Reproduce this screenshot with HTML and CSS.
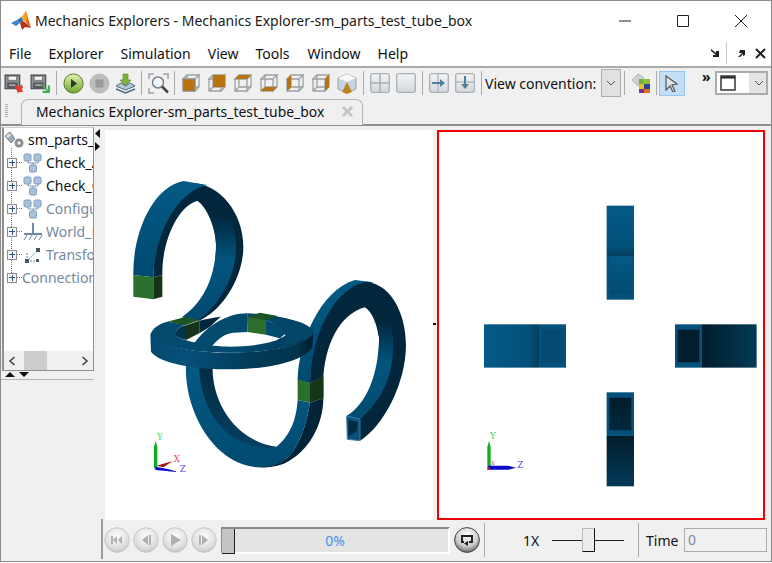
FILE: index.html
```html
<!DOCTYPE html>
<html lang="en">
<head>
<meta charset="utf-8">
<title>Mechanics Explorers</title>
<link rel="stylesheet" href="styles.css">
</head>
<body>
<svg class="defs" width="0" height="0" aria-hidden="true">
  <defs>
    <linearGradient id="g-play" x1="0" y1="0" x2="0" y2="1"><stop offset="0" stop-color="#dff2b0"/><stop offset="1" stop-color="#6fa52c"/></linearGradient>
    <radialGradient id="g-ball" cx=".5" cy=".35" r=".7"><stop offset="0" stop-color="#fff"/><stop offset=".7" stop-color="#ddd"/><stop offset="1" stop-color="#bbb"/></radialGradient>
    <radialGradient id="g-ball-dark" cx=".5" cy=".3" r=".75"><stop offset="0" stop-color="#fff"/><stop offset=".6" stop-color="#ccc"/><stop offset="1" stop-color="#555"/></radialGradient>
    <linearGradient id="g-tile" x1="0" y1="0" x2="0" y2="1"><stop offset="0" stop-color="#f4f4f4"/><stop offset="1" stop-color="#d4d8dc"/></linearGradient>
    <symbol id="cube" viewBox="0 0 20 20">
      <path d="M2 6h12v12H2zM2 6l4-4h12l-4 4zM14 6l4-4v12l-4 4zM2 18l4-4h12M6 2v12" fill="none" stroke="#9aa0a4" stroke-width="1.3"/>
    </symbol>
    <symbol id="floppy" viewBox="0 0 20 20">
      <path d="M1 2h14v13H1z" fill="#8b8f94" stroke="#444" stroke-width="1"/>
      <path d="M4 3h8v4H4z" fill="#f2f2f2" stroke="#555" stroke-width=".6"/>
      <path d="M3 9h10v6H3z" fill="#55595e"/>
      <path d="M5 11h6v1H5z" fill="#ddd"/>
    </symbol>
    <symbol id="tile" viewBox="0 0 20 20">
      <rect x=".7" y=".7" width="18.6" height="18.6" rx="2" fill="url(#g-tile)" stroke="#a8b0b6" stroke-width="1.3"/>
    </symbol>
    <symbol id="block" viewBox="0 0 20 20">
      <path d="M5 7v3h10V7M10 10v3" fill="none" stroke="#7f9ab8" stroke-width="1"/>
      <rect x="1" y="1" width="7" height="7" rx="1.5" fill="#a9c2dc" stroke="#7f9ab8"/>
      <rect x="11" y="1" width="7" height="7" rx="1.5" fill="#a9c2dc" stroke="#7f9ab8"/>
      <rect x="6.500" y="12" width="7" height="7" rx="1.500" fill="#a9c2dc" stroke="#7f9ab8"/>
    </symbol>
    <symbol id="round" viewBox="0 0 26 26">
      <circle cx="13" cy="13" r="12.300" fill="url(#g-ball)" stroke="#c8c8c8"/>
    </symbol>
  </defs>
</svg>

<div class="window">
  <header class="titlebar">
    <svg class="logo" width="22" height="22" viewBox="0 0 22 22">
      <path d="M1 13l6-3 3 3-4 3z" fill="#3f86c6"/>
      <path d="M7 10l5-3 1 4-3 2z" fill="#2a6ea8"/>
      <path d="M12 7l4-6 5 17-4-4-3-5z" fill="#e8641b"/>
      <path d="M12 7l4-6 1 9-3 2z" fill="#f2a516"/>
      <path d="M10 13l3-2 4 3 4 4-6-1-3 3z" fill="#b9301a"/>
    </svg>
    <span class="title">Mechanics Explorers - Mechanics Explorer-sm_parts_test_tube_box</span>
    <div class="caption">
      <svg width="14" height="14" viewBox="0 0 14 14"><path d="M1 7h12" stroke="#222" stroke-width="1"/></svg>
      <svg width="14" height="14" viewBox="0 0 14 14"><path d="M1.500 1.500h11v11h-11z" fill="none" stroke="#222"/></svg>
      <svg width="14" height="14" viewBox="0 0 14 14"><path d="M1 1l12 12M13 1L1 13" stroke="#222" stroke-width="1"/></svg>
    </div>
  </header>

  <nav class="menubar">
    <span>File</span><span>Explorer</span><span>Simulation</span><span>View</span><span>Tools</span><span>Window</span><span>Help</span>
    <div class="dock">
      <svg width="10" height="10" viewBox="0 0 10 10"><path d="M1 1l5 4V3l3 0v6H3V7h3L1 3z" fill="#222"/></svg>
      <i class="dock-sep"></i>
      <svg width="10" height="10" viewBox="0 0 10 10"><path d="M2 9L6 5H3l1-3h5v5l-2 1V6L4 9z" fill="#222"/></svg>
      <svg width="11" height="11" viewBox="0 0 11 11"><path d="M1 1l9 9M10 1l-9 9" stroke="#222" stroke-width="2"/></svg>
    </div>
  </nav>

  <div class="toolbar">
    <span class="tb"><svg width="21" height="21" viewBox="0 0 20 20"><use href="#floppy"/><path d="M11 11l3 2 3-2 1 3-1 1 1 3-3 0-2 1-1-3-2-2z" fill="#e63a2e"/></svg></span>
    <span class="tb"><svg width="21" height="21" viewBox="0 0 20 20"><use href="#floppy"/><path d="M11 10l6 6v-4l2 0v7h-7v-2h4l-6-6z" fill="#3fb05a"/></svg></span>
    <i class="sep"></i>
    <span class="tb"><svg width="21" height="21" viewBox="0 0 21 21"><circle cx="10.500" cy="10.500" r="9.600" fill="url(#g-play)" stroke="#5a7a30"/><path d="M8 6l6 4.500-6 4.500z" fill="#333"/></svg></span>
    <span class="tb"><svg width="21" height="21" viewBox="0 0 21 21"><circle cx="10.500" cy="10.500" r="10" fill="#bdbdbd"/><rect x="6.500" y="6.500" width="8" height="8" fill="#9a9a9a"/></svg></span>
    <span class="tb"><svg width="21" height="21" viewBox="0 0 21 21"><path d="M8 1h5v6h3l-5.500 6L5 7h3z" fill="#7fb23a" stroke="#55802a" stroke-width=".6"/><path d="M1 13l5-3 4.500 3 4.500-3 5 3-9.500 4z" fill="#b8cbd8" stroke="#4b6a80"/><path d="M1 16l9.500 4 9.500-4" fill="none" stroke="#4b6a80" stroke-width="1.500"/></svg></span>
    <i class="sep"></i>
    <span class="tb"><svg width="21" height="21" viewBox="0 0 21 21"><path d="M1 6V1h5M15 1h5v5M1 15v5h5" fill="none" stroke="#9ba3a9" stroke-width="1.500"/><circle cx="10" cy="9.500" r="5.500" fill="#f4f8fb" stroke="#77808a" stroke-width="1.500"/><path d="M14 13.500l6 6" stroke="#444" stroke-width="2.500"/></svg></span>
    <i class="sep"></i>
    <span class="tb"><svg width="20" height="20" viewBox="0 0 20 20"><use href="#cube"/><path d="M2 6h12v12H2z" fill="#b8730f" stroke="#8f8f8f"/></svg></span>
    <span class="tb"><svg width="20" height="20" viewBox="0 0 20 20"><use href="#cube"/><path d="M6 2h12v12H6z" fill="#b8730f"/></svg></span>
    <span class="tb"><svg width="20" height="20" viewBox="0 0 20 20"><use href="#cube"/><path d="M2 6l4-4h12l-4 4z" fill="#b8730f"/></svg></span>
    <span class="tb"><svg width="20" height="20" viewBox="0 0 20 20"><use href="#cube"/><path d="M2 18l4-4h12l-4 4z" fill="#b8730f"/></svg></span>
    <span class="tb"><svg width="20" height="20" viewBox="0 0 20 20"><use href="#cube"/><path d="M2 6l4-4v12l-4 4z" fill="#b8730f"/></svg></span>
    <span class="tb"><svg width="20" height="20" viewBox="0 0 20 20"><use href="#cube"/><path d="M14 6l4-4v12l-4 4z" fill="#b8730f"/></svg></span>
    <span class="tb"><svg width="20" height="21" viewBox="0 0 20 21"><path d="M1 5l9-4 9 4v11l-9 4-9-4z" fill="#c6d4e2" stroke="#9aa0a4"/><path d="M1 5l9 4 9-4-9-4z" fill="#f8f8f8"/><path d="M10 9l5 10-5 2-5-2z" fill="#b8841c"/></svg></span>
    <i class="sep"></i>
    <span class="tb"><svg width="20" height="20" viewBox="0 0 20 20"><use href="#tile"/><path d="M10 1v18M1 10h18" stroke="#a8b0b6" stroke-width="1.500"/></svg></span>
    <span class="tb"><svg width="20" height="20" viewBox="0 0 20 20"><use href="#tile"/></svg></span>
    <i class="sep"></i>
    <span class="tb"><svg width="20" height="20" viewBox="0 0 20 20"><use href="#tile"/><path d="M9 1v18" stroke="#a8b0b6" stroke-width="1.200"/><path d="M3 9h8V6l5 4-5 4v-3H3z" fill="#4f7f9e"/></svg></span>
    <span class="tb"><svg width="20" height="20" viewBox="0 0 20 20"><use href="#tile"/><path d="M1 9h18" stroke="#a8b0b6" stroke-width="1.200"/><path d="M9 3h2v8h3l-4 5-4-5h3z" fill="#4f7f9e"/></svg></span>
    <i class="sep"></i>
    <span class="tb-label">View convention:</span>
    <span class="drop"><svg width="10" height="6" viewBox="0 0 10 6"><path d="M1 1l4 4 4-4" fill="none" stroke="#555"/></svg></span>
    <i class="sep"></i>
    <span class="tb"><svg width="21" height="21" viewBox="0 0 21 21"><path d="M1 7l6-6 6 4-6 8z" fill="#c9d0d6" stroke="#b0b6bb"/><path d="M8 6h4v5H8z" fill="#6fae3a"/><path d="M12 6h7v5h-7z" fill="#8fbf3a"/><path d="M8 11h5v5H8z" fill="#e4c21e"/><path d="M13 11h6v5h-6z" fill="#2a3f9a"/><path d="M8 16h5v4H8z" fill="#7a2d8f"/><path d="M13 16h6v4h-6z" fill="#e8701a"/></svg></span>
    <i class="sep narrow"></i>
    <span class="tb active"><svg width="14" height="17" viewBox="0 0 14 17"><path d="M1 1l11 8-5 1 3 6-2 1-3-6-4 4z" fill="#dfe4e8" stroke="#555" stroke-width="1.200"/></svg></span>
    <span class="chev">»</span>
    <span class="combo">
      <span class="combo-box"><svg width="16" height="16" viewBox="0 0 16 16"><path d="M1 1h14v14H1z" fill="#fff" stroke="#333" stroke-width="1.500"/><path d="M1 2.500h14" stroke="#222" stroke-width="2"/></svg></span>
      <svg class="combo-arrow" width="10" height="6" viewBox="0 0 10 6"><path d="M1 1l4 4 4-4" fill="none" stroke="#555"/></svg>
    </span>
  </div>

  <div class="tabstrip">
    <i class="grip"></i>
    <div class="tab">
      <span>Mechanics Explorer-sm_parts_test_tube_box</span>
      <svg width="13" height="13" viewBox="0 0 13 13"><path d="M2 2l9 9M11 2l-9 9" stroke="#c2c6ca" stroke-width="3"/></svg>
    </div>
  </div>

  <main class="workspace">
    <aside class="side">
      <div class="tree-box">
        <div class="tree">
          <div class="row root">
            <svg width="22" height="18" viewBox="0 0 22 18"><path d="M1 5l5-4 5 7-4 4z" fill="#9aa9b8" stroke="#6a7682" stroke-width=".8"/><path d="M2 5l4-3 1 2-3 3z" fill="#dfe6ec"/><circle cx="15" cy="12" r="4.500" fill="#8d8d8d"/><circle cx="15" cy="12" r="1.700" fill="#eee"/></svg>
            <span>sm_parts_test_tube_box</span>
          </div>
          <div class="row"><i class="plus"></i><i class="dots"></i><svg width="20" height="20" viewBox="0 0 20 20"><use href="#block"/></svg><span>Check_Assembly</span></div>
          <div class="row"><i class="plus"></i><i class="dots"></i><svg width="20" height="20" viewBox="0 0 20 20"><use href="#block"/></svg><span>Check_Geometry</span></div>
          <div class="row off"><i class="plus"></i><i class="dots"></i><svg width="20" height="20" viewBox="0 0 20 20"><use href="#block"/></svg><span>Configuration</span></div>
          <div class="row off"><i class="plus"></i><i class="dots"></i><svg width="20" height="20" viewBox="0 0 20 20"><path d="M10 1v11M1 12h18" stroke="#6f8aa6" stroke-width="2"/><path d="M4 13l-3 5M9 13l-3 5M14 13l-3 5M19 13l-3 5" stroke="#6f8aa6"/></svg><span>World_Frame</span></div>
          <div class="row off"><i class="plus"></i><i class="dots"></i><svg width="20" height="20" viewBox="0 0 20 20"><path d="M4 16L15 5M4 16h11M4 16V8" fill="none" stroke="#6f8aa6" stroke-dasharray="2 1"/><path d="M2 14h4v4H2zM13 3h4v4h-4zM13 14h3v3h-3z" fill="#46586a"/></svg><span>Transform</span></div>
          <div class="row off conn"><i class="plus"></i><i class="dots"></i><span>Connections</span></div>
        </div>
        <div class="hscroll">
          <svg width="8" height="10" viewBox="0 0 8 10"><path d="M6.500 1L2 5l4.500 4" fill="none" stroke="#444" stroke-width="1.600"/></svg>
          <i class="thumb"></i>
          <svg width="8" height="10" viewBox="0 0 8 10"><path d="M1.500 1L6 5 1.500 9" fill="none" stroke="#444" stroke-width="1.600"/></svg>
        </div>
      </div>
      <div class="split">
        <svg width="26" height="6" viewBox="0 0 26 6"><path d="M0 5l5-5 5 5zM14 0h10l-5 5z" fill="#111"/></svg>
      </div>
    </aside>

    <div class="sash">
      <svg width="6" height="24" viewBox="0 0 6 24"><path d="M5 0v9L0 4.500zM0 13v9l5-4.500z" fill="#111"/></svg>
    </div>

    <div class="views">
      <section class="view">
        <svg class="scene" viewBox="0 0 328 390">
          <defs>
            <linearGradient id="lt" x1="0" y1="0" x2="0" y2="1"><stop offset="0" stop-color="#045a85"/><stop offset="1" stop-color="#004a70"/></linearGradient>
            <linearGradient id="band" x1="0" y1="0" x2="0" y2="1"><stop offset="0" stop-color="#02263b"/><stop offset=".12" stop-color="#02263b"/><stop offset=".5" stop-color="#02557f"/><stop offset="1" stop-color="#024a70"/></linearGradient>
            <linearGradient id="ringside" x1="0" y1="0" x2="1" y2="0"><stop offset="0" stop-color="#054a70"/><stop offset=".2" stop-color="#05507a"/><stop offset=".6" stop-color="#033c5a"/><stop offset=".9" stop-color="#02334c"/><stop offset="1" stop-color="#021c2a"/></linearGradient>
            <linearGradient id="ringtop" x1="0" y1="0" x2="1" y2="0"><stop offset="0" stop-color="#024a6e"/><stop offset=".5" stop-color="#034a70"/><stop offset="1" stop-color="#023a58"/></linearGradient>
            <linearGradient id="lowin" x1="0" y1="0" x2="0" y2="1"><stop offset="0" stop-color="#022c44"/><stop offset="1" stop-color="#053f60"/></linearGradient>
          </defs>
          <g transform="translate(5 40) scale(.3333)">
            <!-- right arc, behind -->
            <path d="M563 630C565 520 630 360 735 330L790 337C700 370 610 480 600 640Z" fill="url(#lt)"/>
            <path d="M600 640C605 480 680 350 770 335C850 345 888 440 888 525C888 640 820 770 750 812L748 748C810 690 845 590 805 495C800 460 785 425 765 412C700 430 650 500 640 620Z" fill="#02263b"/>
            <path d="M765 412C800 425 812 490 806 530C800 620 770 700 710 738L748 748C810 700 850 620 850 525C850 470 835 430 825 412Z" fill="url(#band)"/>
            <path d="M710 738L750 748 750 812 712 808Z" fill="#0b5078" stroke="#3c7ea6" stroke-width="3"/>
            <path d="M716 750L742 756 742 782 716 800Z" fill="#032a40"/>
            <path d="M716 800L742 782 742 806Z" fill="#0a5279"/>
            <!-- lower arc -->
            <path d="M228 585C222 720 310 885 445 892C490 895 530 875 552 840C580 795 592 745 600 698L563 690C558 760 535 800 500 830C430 840 330 780 300 640L268 590Z" fill="url(#lt)"/>
            <path d="M268 590L308 590C305 700 380 815 500 830C420 845 330 800 290 700C275 665 268 625 268 590Z" fill="url(#lowin)"/>
            <path d="M600 698L640 685C640 760 600 845 520 882C490 892 470 892 445 892C490 892 530 875 552 840C580 795 592 745 600 698Z" fill="#022338"/>
            <path d="M563 628L600 640 600 698 563 690Z" fill="#2a6f2c"/>
            <path d="M600 640L641 618 641 685 600 698Z" fill="#15351a"/>
            <!-- rising piece behind the ring -->
            <path d="M250 525C285 470 350 430 412 430L412 486 370 488C340 492 320 510 300 535Z" fill="#034a6f"/>
            <path d="M268 452C290 447 310 442 332 440L300 470 268 490Z" fill="#02263b"/>
            <!-- ring -->
            <path d="M195 490C200 475 215 468 228 466L228 510C210 505 195 500 195 490Z" fill="#02334c"/>
            <path d="M468 450L540 480 510 505 468 494Z" fill="#034a6f"/>
            <path d="M121 495L123 545C150 582 260 598 360 598C480 598 590 570 607 530L610 490C580 530 470 548 360 548C250 548 150 530 121 495Z" fill="url(#ringside)"/>
            <path d="M121 495C125 475 150 460 172 455L225 464C205 472 190 485 200 498C215 512 300 530 360 530C420 530 490 520 510 505C530 495 540 490 525 480C505 465 480 450 465 450L412 464 412 430 C470 432 610 450 610 490C590 530 470 548 360 548C250 548 140 530 121 495Z" fill="url(#ringtop)"/>
            <path d="M468 450L500 440C550 450 600 465 610 490C600 505 560 520 520 528C540 495 520 470 468 450Z" fill="#03466a"/>
            <path d="M412 440L468 450 468 494 412 486Z" fill="#2a6f2c"/>
            <path d="M412 440L450 428 504 438 468 450Z" fill="#1d5425"/>
            <!-- top arc -->
            <path d="M130 322C132 190 180 70 245 40C330 40 400 130 400 230C400 320 340 420 268 452L225 440C290 400 320 300 318 220C315 170 290 110 262 92C200 110 155 220 157 315Z" fill="#02263b"/>
            <path d="M262 92C295 112 318 170 318 225C318 310 285 395 215 442L268 450C330 400 378 320 378 230C378 170 355 120 335 105Z" fill="url(#band)"/>
            <path d="M70 315C68 200 120 55 220 33L292 45C200 65 135 190 130 322Z" fill="url(#lt)"/>
            <path d="M70 315L130 322 130 388 70 380Z" fill="#2a6f2c"/>
            <path d="M130 322L157 315 157 380 130 388Z" fill="#15351a"/>
            <path d="M172 455L225 441 268 451 225 466Z" fill="#1d5425"/>
            <path d="M228 466L268 452 268 490 228 510Z" fill="#15351a"/>
            <!-- triad -->
            <path d="M132 895V830L137 812 142 830V895Z" fill="#0fae1f"/>
            <path d="M140 887L188 873 160 892Z" fill="#a50f0f"/>
            <path d="M136 890L170 896 206 906 136 900Z" fill="#0a0ac8"/>
            <text class="axis" x="141" y="811" fill="#3fdc4a">Y</text>
            <text class="axis" x="191" y="875" fill="#e8494b">X</text>
            <text class="axis" x="209" y="905" fill="#4a4aee">Z</text>
          </g>
        </svg>
      </section>
      <i class="tick"></i>
      <section class="view selected">
        <svg class="scene" viewBox="0 0 324 386">
          <defs>
            <linearGradient id="v1" x1="0" y1="0" x2="0" y2="1"><stop offset="0" stop-color="#045a85"/><stop offset=".8" stop-color="#03507a"/><stop offset="1" stop-color="#033f60"/></linearGradient>
            <linearGradient id="v2" x1="0" y1="0" x2="0" y2="1"><stop offset="0" stop-color="#045a85"/><stop offset="1" stop-color="#044a70"/></linearGradient>
            <linearGradient id="h1" x1="0" y1="0" x2="1" y2="0"><stop offset="0" stop-color="#045a85"/><stop offset=".8" stop-color="#03507a"/><stop offset="1" stop-color="#033f60"/></linearGradient>
            <linearGradient id="h2" x1="0" y1="0" x2="1" y2="0"><stop offset="0" stop-color="#021c2a"/><stop offset="1" stop-color="#033a58"/></linearGradient>
            <linearGradient id="v3" x1="0" y1="0" x2="0" y2="1"><stop offset="0" stop-color="#021c2a"/><stop offset="1" stop-color="#033a58"/></linearGradient>
            <linearGradient id="in1" x1="0" y1="0" x2="0" y2="1"><stop offset="0" stop-color="#021c2a"/><stop offset="1" stop-color="#03283e"/></linearGradient>
          </defs>
          <g transform="translate(1 58) scale(.3333)">
            <rect x="500" y="47" width="82" height="151" fill="url(#v1)"/>
            <rect x="500" y="198" width="82" height="131" fill="#04527c"/>
            <rect x="508" y="198" width="66" height="115" fill="url(#v2)"/>
            <rect x="132" y="403" width="165" height="130" fill="url(#h1)"/>
            <rect x="297" y="403" width="81" height="130" fill="#04527c"/>
            <rect x="305" y="419" width="66" height="98" fill="#044a70"/>
            <rect x="705" y="403" width="81" height="130" fill="#04527c"/>
            <rect x="713" y="419" width="65" height="98" fill="#021e2e"/>
            <rect x="786" y="403" width="164" height="130" fill="url(#h2)"/>
            <rect x="500" y="607" width="82" height="131" fill="#04527c"/>
            <rect x="508" y="623" width="66" height="98" fill="url(#in1)"/>
            <rect x="500" y="738" width="82" height="151" fill="url(#v3)"/>
            <path d="M142 836V772L147 752 152 772V836Z" fill="#0fae1f"/>
            <path d="M144 827H205L228 833 205 839H144Z" fill="#0a0ac8"/>
            <rect x="142" y="832" width="8" height="8" fill="#d42020"/>
            <text class="axis" x="150" y="748" fill="#3fdc4a">Y</text>
            <text class="axis small" x="153" y="826" fill="#e8494b">x</text>
            <text class="axis" x="232" y="834" fill="#4a4aee">Z</text>
          </g>
        </svg>
      </section>
    </div>
  </main>

  <footer class="player">
    <div class="transport">
      <svg class="ball" viewBox="0 0 26 26"><use href="#round"/><path d="M7 9h2v8H7zM13 9v8l-4-4zM18 9v8l-4-4z" fill="#b0b0b0"/></svg>
      <svg class="ball" viewBox="0 0 26 26"><use href="#round"/><path d="M15 8v10l-6-5zM16 8h2v10h-2z" fill="#b0b0b0"/></svg>
      <svg class="ball" viewBox="0 0 26 26"><use href="#round"/><path d="M9 7l10 6-10 6z" fill="#b0b0b0"/></svg>
      <svg class="ball" viewBox="0 0 26 26"><use href="#round"/><path d="M8 8h2v10H8zM11 8l6 5-6 5z" fill="#b0b0b0"/></svg>
    </div>
    <div class="progress"><i class="handle"></i><span>0%</span></div>
    <svg class="ball loop" viewBox="0 0 26 26"><circle cx="13" cy="13" r="12.400" fill="url(#g-ball-dark)" stroke="#444"/><path d="M7 8h12v8h-4v-2h2v-4H9v4h1v2H7z" fill="#222"/><path d="M14 14v5l-4-2.500z" fill="#222"/></svg>
    <i class="vline first"></i>
    <span class="speed">1X</span>
    <div class="speed-slider"><i class="knob"></i></div>
    <i class="vline"></i>
    <span class="time-label">Time</span>
    <span class="time-field">0</span>
  </footer>
</div>
</body>
</html>
```
FILE: styles.css
```css
* { box-sizing: border-box; }
html, body { margin: 0; padding: 0; }
body { width: 772px; height: 563px; overflow: hidden; background: #fff; font-family: "Noto Sans", "Open Sans", sans-serif; font-size: 14px; color: #111; }
.defs { position: absolute; }
i { display: block; font-style: normal; }
svg { display: block; flex: none; }

.window { width: 772px; height: 562px; display: flex; flex-direction: column; border: 1px solid #8c8c8c; background: #f0f0f0; }

.titlebar { height: 39px; flex: none; background: #fff; display: flex; align-items: center; padding-left: 9px; }
.logo { margin-right: 3px; }
.title { font-size: 14px; white-space: nowrap; color: #1a1a1a; }
.caption { margin-left: auto; display: flex; gap: 44px; padding-right: 23px; width: 153px; }

.menubar { height: 28px; flex: none; background: #fff; display: flex; align-items: center; gap: 17px; padding-left: 8px; border-bottom: 2px solid #ababab; }
.menubar > span { font-size: 14px; }
.menubar > span:nth-child(n+6) { position: relative; left: 1px; }
.dock { margin-left: auto; display: flex; align-items: center; padding-right: 5px; }
.dock svg:nth-child(3) { margin: 0 9px 0 0; }
.dock-sep { width: 1px; height: 22px; background: #c8c8c8; margin: 0 9px 0 6px; }

.toolbar { height: 30px; flex: none; display: flex; align-items: center; }
.tb { width: 26px; height: 25px; display: flex; align-items: center; justify-content: center; flex: none; }
.sep { width: 1px; height: 24px; background: #a9a9a9; margin: 0 3px 0 3px; flex: none; }
.tb-label { font-size: 14px; width: 113px; white-space: nowrap; margin-left: 0; }
.drop { width: 20px; height: 28px; margin-left: 3px; background: #e1e1e1; border: 1px solid #adadad; display: flex; align-items: center; justify-content: center; flex: none; }
.sep.narrow { margin: 0 2px; }
.tb.active { height: 25px; background: #c4def5; border: 1px solid #94c8f2; }
.chev { width: 9px; margin: -13px 4px 0 17px; font-size: 14px; line-height: 14px; font-weight: 700; color: #111; flex: none; }
.combo { width: 53px; height: 24px; background: #e4e4e4; border: 2px solid #acacac; display: flex; align-items: center; flex: none; }
.combo-box { width: 32px; height: 20px; background: #fff; display: flex; align-items: center; padding-left: 3px; }
.combo-arrow { margin-left: 5px; }

.tabstrip { height: 28px; flex: none; display: flex; align-items: flex-end; padding-left: 4px; border-bottom: 2px solid #8f8f8f; }
.grip { width: 3px; height: 14px; margin: 0 13px 6px 0; background: repeating-linear-gradient(to bottom, #b0b0b0 0 1px, transparent 1px 2px); }
.tab { width: 342px; height: 26px; margin-bottom: -1px; display: flex; align-items: center; justify-content: space-between; padding: 0 8px 2px 14px; background: #f0f0f0; border: 1px solid #b5b5b5; border-bottom: 0; border-radius: 7px 7px 0 0; font-size: 13.900px; white-space: nowrap; }

.workspace { flex: 1; min-height: 0; display: flex; }
.side { width: 93px; flex: none; display: flex; flex-direction: column; }
.tree-box { height: 244px; margin: 1px 0 0 1px; background: #fff; border: 1px solid #8f8f8f; border-top-color: #cfcfcf; border-left-width: 2px; display: flex; flex-direction: column; overflow: hidden; }
.tree { flex: 1; position: relative; padding-top: 0; overflow: hidden; }
.tree::before { content: ""; position: absolute; left: 7px; top: 20px; height: 125px; border-left: 1px dotted #777; }
.row { height: 23px; display: flex; align-items: center; padding-left: 3px; white-space: nowrap; font-size: 14px; position: relative; }
.row.root { padding-left: 0; gap: 2px; }
.row.off { color: #76899b; }
.row svg { margin-right: 3px; }
.row.root svg { margin-right: 0; }
.plus { width: 10px; height: 10px; flex: none; border: 1px solid #8c8c8c; background: linear-gradient(#2d4f8a, #2d4f8a) center / 6px 1px no-repeat, linear-gradient(#2d4f8a, #2d4f8a) center / 1px 6px no-repeat, #f4f4f4; }
.dots { width: 5px; flex: none; margin-right: 1px; border-top: 1px dotted #777; }
.conn .dots { margin-right: 0; }
.hscroll { height: 19px; flex: none; background: #f0f0f0; display: flex; align-items: center; padding: 0 4px; justify-content: space-between; }
.thumb { width: 23px; height: 19px; background: #cdcdcd; margin: 0 auto 0 8px; }
.split { height: 9px; padding: 1px 0 0 4px; border-bottom: 1px solid #b5b5b5; }

.sash { width: 11px; flex: none; padding: 3px 0 0 1px; }
.views { flex: 1; min-width: 0; display: flex; align-items: flex-start; padding: 4px 5px 0 0; height: 396px; position: relative; }
.view { width: 328px; height: 390px; background: #fff; flex: none; }
.view.selected { border: 2px solid #ee0000; margin-left: 4px; }
.scene { width: 100%; height: 100%; }
.axis { font-family: "DejaVu Serif", serif; font-size: 26px; }
.axis.small { font-size: 20px; }
.tick { position: absolute; left: 328px; top: 197px; width: 3px; height: 2px; background: #111; }

.player { height: 38px; flex: none; display: flex; align-items: center; padding: 0 0 4px 103px; margin-top: -1px; position: relative; }
.player::before { content: ""; position: absolute; left: 100px; top: -4px; bottom: 2px; width: 2px; background: #9c9c9c; }
.transport { display: flex; gap: 3px; margin-right: 4px; }
.ball { width: 26px; height: 26px; }
.progress { width: 229px; height: 27px; background: #e4e4e4; border-top: 2px solid #8a8a8a; border-left: 1px solid #8a8a8a; border-right: 2px solid #fff; border-bottom: 2px solid #fff; display: flex; align-items: center; position: relative; }
.handle { position: absolute; left: 0; top: 0; width: 13px; height: 25px; background: #c4c4c4; border: 1px solid #222; border-width: 0 1px 1px 0; }
.progress span { flex: 1; text-align: center; color: #3c96f0; font-size: 14px; }
.loop { margin-left: 4px; }
.vline { width: 1px; height: 34px; background: #a9a9a9; margin-left: 4px; flex: none; }
.speed { width: 32px; margin-left: 38px; font-size: 14px; }
.speed-slider { width: 72px; height: 24px; margin-left: -3px; position: relative; background: linear-gradient(#222, #222) center / 100% 1px no-repeat; }
.knob { position: absolute; left: 30px; top: 0; width: 13px; height: 24px; background: #ededed; border: 1px solid #bbb; border-right: 1px solid #111; border-bottom: 1px solid #111; }
.vline:not(.first) { margin-left: 14px; }
.time-label { margin-left: 7px; width: 38px; font-size: 14px; }
.time-field { width: 83px; height: 24px; border: 1px solid #ababab; color: #7f8c99; font-size: 14px; line-height: 22px; padding-left: 3px; background: #f0f0f0; }
```
